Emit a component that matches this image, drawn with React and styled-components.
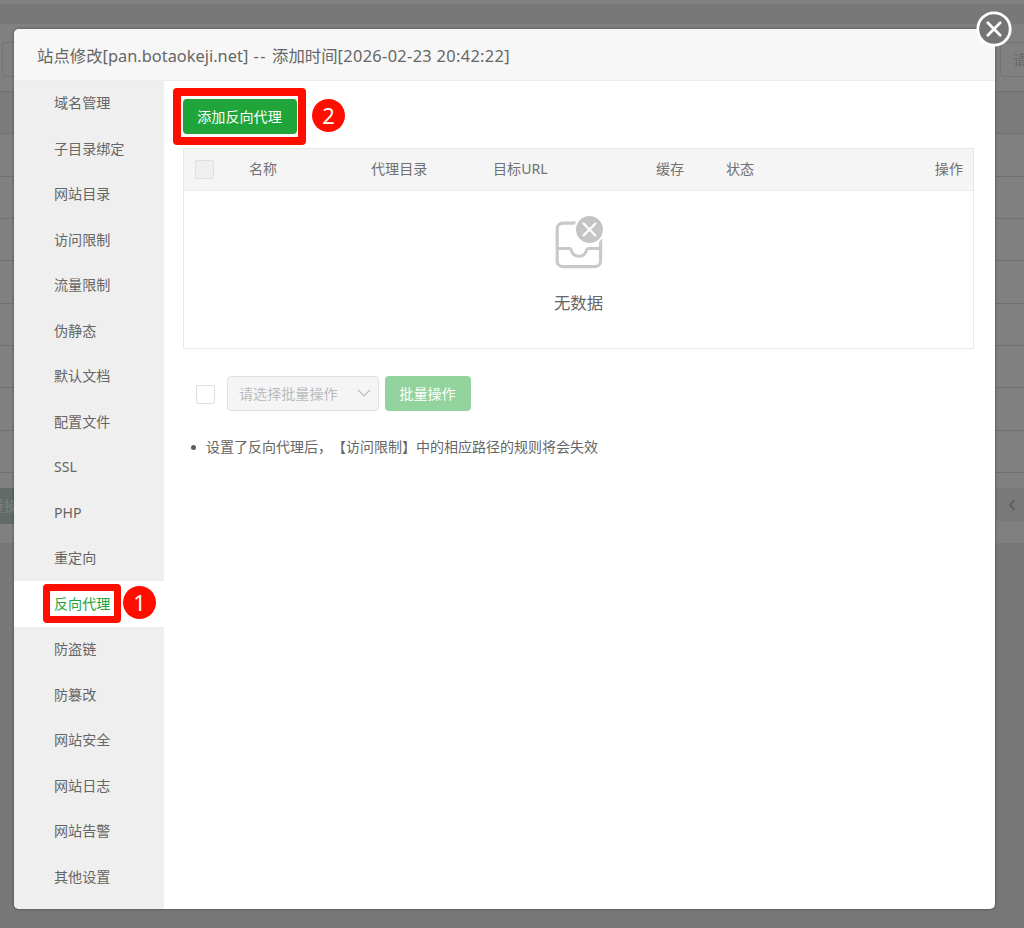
import React from "react";
import styled, { createGlobalStyle } from "styled-components";

const Global = createGlobalStyle`
  * { box-sizing: border-box; }
  body {
    margin: 0;
    overflow: hidden;
    background: #787878;
    font-family: "Noto Sans", "Noto Sans CJK SC", sans-serif;
    font-size: 14.1px;
    color: #666;
    text-spacing-trim: space-all;
  }
  button { font-family: inherit; }
`;

const Screen = styled.div`
  position: relative;
  width: 1024px;
  height: 928px;
  overflow: hidden;
`;

const Backdrop = styled.div`
  display: flex;
  flex-direction: column;
  height: 928px;
  background: #787878;
`;

const TopStrip = styled.div`
  height: 4px;
  margin-bottom: 20px;
  background: #808080;
`;

const BackPanel = styled.div`
  height: 519px;
  background: #808080;
`;

const BackToolbar = styled.div`
  display: flex;
  justify-content: space-between;
  height: 67px;
  padding: 18px 0 14px;
`;

const BackField = styled.div`
  width: ${(p) => p.$width}px;
  height: 35px;
  margin-left: ${(p) => p.$offset || 0}px;
  margin-right: ${(p) => p.$bleed || 0}px;
  padding-left: 12px;
  border: 1px solid #747474;
  border-radius: 4px;
  line-height: 33px;
  color: #656968;
  white-space: nowrap;
`;

const BackRow = styled.div`
  height: 42.35px;
  border-top: 1px solid #717171;
  background: ${(p) => (p.$head ? "#7b7b7b" : "transparent")};
`;

const BackFooter = styled.div`
  display: flex;
  justify-content: space-between;
  padding-top: 15px;
  border-top: 1px solid #717171;
`;

const BackBatch = styled.div`
  width: 60px;
  height: 36px;
  margin-left: -24px;
  background: #626c66;
  color: #7d8280;
  line-height: 36px;
  white-space: nowrap;
`;

const BackPager = styled.div`
  display: flex;
  align-items: center;
  width: 28px;
  height: 33px;
  padding-left: 12px;
  background: #797979;
`;

const Modal = styled.section`
  position: absolute;
  left: 14px;
  top: 29px;
  display: flex;
  flex-direction: column;
  width: 981px;
  height: 880px;
  border-radius: 5px;
  background: #fff;
  box-shadow: 0 0 3px rgba(0, 0, 0, 0.45);
`;

const ModalHeader = styled.header`
  height: 52px;
  padding-left: 23px;
  border-bottom: 1px solid #ececec;
  border-radius: 5px 5px 0 0;
  background: #f7f7f7;
  font-size: 16.4px;
  line-height: 53px;
  white-space: nowrap;
`;

const Dashes = styled.span`
  margin: 0 1px;
  letter-spacing: 1.3px;
`;

const Stamp = styled.span`
  letter-spacing: 0.32px;
`;

const ModalBody = styled.div`
  display: flex;
  flex: 1;
  min-height: 0;
`;

const Sidebar = styled.nav`
  width: 150px;
  border-radius: 0 0 0 5px;
  background: #efefef;
`;

const SideItem = styled.div`
  height: 45.53px;
  padding-left: 40px;
  line-height: 44.5px;
  color: ${(p) => (p.$active ? "#20a53a" : "#666")};
  background: ${(p) => (p.$active ? "#fff" : "transparent")};
  box-shadow: ${(p) => (p.$active ? "0 -1px 0 #fff" : "none")};
`;

const Marked = styled.span`
  position: relative;
  display: inline-block;
`;

const MarkFrame = styled.span`
  position: absolute;
  left: ${(p) => p.$x}px;
  top: ${(p) => p.$y}px;
  width: ${(p) => p.$w}px;
  height: ${(p) => p.$h}px;
  border: ${(p) => p.$stroke}px solid #ff0e00;
  border-radius: 4px;
`;

const MarkNumber = styled.span`
  position: absolute;
  left: ${(p) => p.$x}px;
  top: ${(p) => p.$y}px;
  width: 33px;
  height: 33px;
  border-radius: 50%;
  background: #ff0e00;
  color: #fff;
  font-size: 22px;
  line-height: 32px;
  text-align: center;
`;

const Content = styled.main`
  flex: 1;
  padding: 18px 21px 0 19px;
`;

const Button = styled.button`
  display: block;
  width: ${(p) => p.$width}px;
  height: 35px;
  padding: 0 1px 0 0;
  border: 0;
  border-radius: 4px;
  background: ${(p) => (p.$muted ? "#92d39e" : "#20a53a")};
  color: #fff;
  font-size: 14.1px;
  line-height: 35px;
`;

const Table = styled.div`
  margin-top: 14px;
  height: 201px;
  border: 1px solid #e8e8e8;
`;

const TableHead = styled.div`
  display: grid;
  grid-template-columns: 65px 122px 122px 163px 70px 1fr;
  align-items: center;
  height: 42px;
  padding-right: 10px;
  border-bottom: 1px solid #ededed;
  background: #f5f5f5;
  color: #717171;
`;

const Cell = styled.span`
  padding-bottom: 3px;
  text-align: ${(p) => p.$align || "left"};
`;

const StatusCells = styled.div`
  display: flex;
  justify-content: space-between;
`;

const Checkbox = styled.span`
  display: block;
  width: 19px;
  height: 19px;
  margin-left: ${(p) => p.$offset}px;
  border: 1px solid #e0e0e0;
  border-radius: 2px;
  background: ${(p) => (p.$disabled ? "#efefef" : "#fff")};
`;

const Empty = styled.div`
  display: flex;
  flex-direction: column;
  align-items: center;
  padding-top: 24px;
  font-size: 16.4px;
  line-height: 24px;

  svg { display: block; margin-bottom: 22px; }
`;

const BatchBar = styled.div`
  display: flex;
  align-items: center;
  margin-top: 27px;

  > ${Checkbox} { margin-top: 2px; }
`;

const Select = styled.div`
  display: flex;
  align-items: center;
  justify-content: space-between;
  width: 152px;
  height: 35px;
  margin: 0 6px 0 12px;
  padding: 0 7px 1px 11px;
  border: 1px solid #e0e0e0;
  border-radius: 4px;
  background: #f5f5f5;
  color: #bbb;
`;

const Notes = styled.ul`
  display: flex;
  margin: 24px 0 0 8px;
  padding: 0;
  list-style: none;
  font-size: 14px;
  line-height: 24px;
  white-space: nowrap;
`;

const Note = styled.li`
  display: flex;
  align-items: center;
  gap: 10px;

  &::before {
    content: "";
    width: 5px;
    height: 5px;
    border-radius: 50%;
    background: #606060;
  }
`;

const CloseButton = styled.span`
  position: absolute;
  left: 976px;
  top: 11px;
  width: 36px;
  height: 36px;

  svg { display: block; }
`;

const MENU = [
  "域名管理", "子目录绑定", "网站目录", "访问限制", "流量限制", "伪静态",
  "默认文档", "配置文件", "SSL", "PHP", "重定向", "反向代理", "防盗链",
  "防篡改", "网站安全", "网站日志", "网站告警", "其他设置",
];

function EmptyIcon() {
  return (
    <svg width="50" height="54" viewBox="0 0 50 54" fill="none">
      <rect x="3.2" y="8.2" width="43.4" height="43.4" rx="5.5" stroke="#c8caca" strokeWidth="3.2" />
      <path d="M3 33.5h13c1 0 1 1 1.4 2.2 1 3.3 4 5.5 7.6 5.5s6.4-2.2 7.4-5.5c.4-1.2.4-2.2 1.4-2.2h13" stroke="#c8caca" strokeWidth="3" />
      <circle cx="35.5" cy="14.5" r="15.5" fill="#fff" />
      <circle cx="35.5" cy="14.5" r="13.5" fill="#c4c6c6" />
      <path d="M29 8l13 13M42 8L29 21" stroke="#fff" strokeWidth="2.2" />
    </svg>
  );
}

export default function App() {
  return (
    <Screen>
      <Global />
      <Backdrop>
        <TopStrip />
        <BackPanel>
          <BackToolbar>
            <BackField $width={40} $offset={2} />
            <BackField $width={60} $bleed={-36}>请</BackField>
          </BackToolbar>
          <BackRow $head />
          {Array.from({ length: 8 }, (_, i) => <BackRow key={i} />)}
          <BackFooter>
            <BackBatch>批量操作</BackBatch>
            <BackPager>
              <svg width="8" height="12" viewBox="0 0 8 12" fill="none">
                <path d="M6.5 1L2 6l4.5 5" stroke="#565b59" strokeWidth="1.5" />
              </svg>
            </BackPager>
          </BackFooter>
        </BackPanel>
      </Backdrop>

      <Modal>
        <ModalHeader>
          站点修改[pan.botaokeji.net] <Dashes>--</Dashes> 添加时间<Stamp>[2026-02-23 20:42:22]</Stamp>
        </ModalHeader>
        <ModalBody>
          <Sidebar>
            {MENU.map((name) => {
              const active = name === "反向代理";
              return (
                <SideItem key={name} $active={active}>
                  {active ? (
                    <Marked>
                      {name}
                      <MarkFrame $x={-11} $y={2} $w={78} $h={39} $stroke={7} />
                      <MarkNumber $x={69} $y={4.5}>1</MarkNumber>
                    </Marked>
                  ) : name}
                </SideItem>
              );
            })}
          </Sidebar>
          <Content>
            <Marked>
              <Button $width={114}>添加反向代理</Button>
              <MarkFrame $x={-10} $y={-11} $w={133} $h={57} $stroke={8} />
              <MarkNumber $x={129} $y={0}>2</MarkNumber>
            </Marked>
            <Table>
              <TableHead>
                <Checkbox $disabled $offset={11} />
                <Cell>名称</Cell>
                <Cell>代理目录</Cell>
                <Cell>目标URL</Cell>
                <Cell>缓存</Cell>
                <StatusCells>
                  <Cell>状态</Cell>
                  <Cell $align="right">操作</Cell>
                </StatusCells>
              </TableHead>
              <Empty>
                <EmptyIcon />
                无数据
              </Empty>
            </Table>
            <BatchBar>
              <Checkbox $offset={13} />
              <Select>
                请选择批量操作
                <svg width="14" height="9" viewBox="0 0 14 9" fill="none">
                  <path d="M1 1l6 6 6-6" stroke="#bbb" strokeWidth="1.2" />
                </svg>
              </Select>
              <Button $width={86} $muted>批量操作</Button>
            </BatchBar>
            <Notes>
              <Note>设置了反向代理后，【访问限制】中的相应路径的规则将会失效</Note>
            </Notes>
          </Content>
        </ModalBody>
      </Modal>

      <CloseButton>
        <svg width="36" height="36" viewBox="0 0 36 36" fill="none">
          <circle cx="18" cy="18" r="16.2" fill="#747474" stroke="#fff" strokeWidth="2.8" />
          <path d="M11.8 11.8l12.4 12.4M24.2 11.8L11.8 24.2" stroke="#fff" strokeWidth="2.7" strokeLinecap="round" />
        </svg>
      </CloseButton>
    </Screen>
  );
}
